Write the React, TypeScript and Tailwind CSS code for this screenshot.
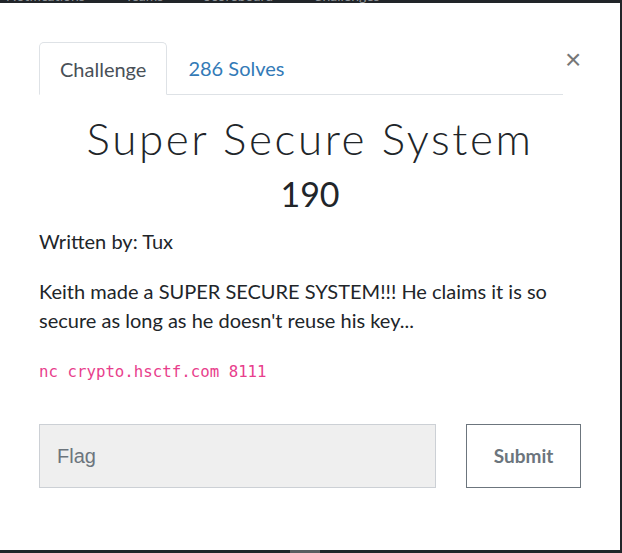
export default function App() {
  return (
    <div className="w-[622px] h-[553px] overflow-hidden bg-[#212529] relative font-['Lato','Noto_Sans',sans-serif]">
      {/* nav peeking above the modal */}
      <div className="h-[3px] overflow-hidden flex gap-[40px] pl-[6px] text-[14px] leading-[14px] text-[#8f9499]">
        <span className="-mt-[11px]">Notifications</span>
        <span className="-mt-[11px]">Teams</span>
        <span className="-mt-[11px]">Scoreboard</span>
        <span className="-mt-[11px]">Challenges</span>
      </div>

      <div className="relative w-[620px] h-[547px] bg-white px-[39px] pt-[39px]">
        <button className="absolute left-[565px] top-[43px] text-[#777] text-[28px] leading-none font-['Liberation_Sans',sans-serif]">
          ×
        </button>

        <ul className="flex w-[524px] border-b border-[#dee2e6] text-[20px]">
          <li className="-mb-px h-[53px] px-[20px] flex items-center border border-[#dee2e6] border-b-white rounded-t-[5px] text-[#495057]">
            Challenge
          </li>
          <li className="h-[52px] px-[21px] flex items-center text-[#337ab7]">286 Solves</li>
        </ul>

        <h3 className="mt-[15px] text-center text-[44px] leading-[56px] font-light tracking-[2.6px] text-[#212529]">
          Super Secure System
        </h3>
        <h4 className="mt-[8px] text-center text-[34px] leading-[40px] text-[#212529]">190</h4>

        <p className="mt-[13px] text-[20px] leading-[28px] text-[#212529]">Written by: Tux</p>

        <p className="mt-[22px] text-[20px] leading-[29px] text-[#212529]">
          Keith made a SUPER SECURE SYSTEM!!! He claims it is so secure as long as he doesn't reuse his key...
        </p>

        <p className="mt-[27px] text-[15.75px] leading-[20px] text-[#e83e8c] font-['DejaVu_Sans_Mono',monospace]">
          nc crypto.hsctf.com 8111
        </p>

        <div className="mt-[42px] flex gap-[30px]">
          <input
            placeholder="Flag"
            className="w-[397px] h-[64px] bg-[#efefef] border border-[#ccd0d5] px-[17px] text-[20px] font-['Liberation_Sans',sans-serif] placeholder:text-[#6c757d] outline-none"
          />
          <button className="w-[115px] h-[64px] border border-[#6c757d] text-[#6c757d] text-[19px] font-bold">
            Submit
          </button>
        </div>
      </div>

      <div className="absolute left-[290px] top-[550px] w-[30px] h-[3px] bg-[#5a5d61]" />
    </div>
  );
}
